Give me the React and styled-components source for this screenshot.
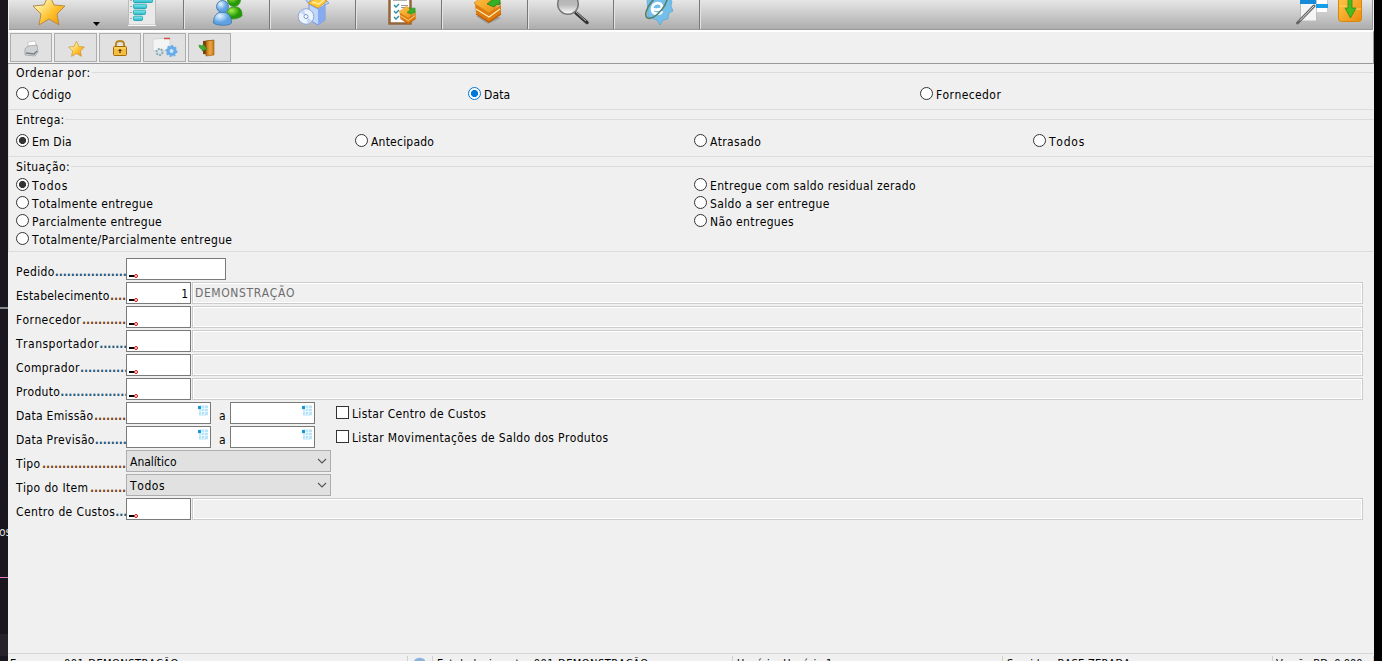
import React from 'react';
import styled, { createGlobalStyle } from 'styled-components';

const Global = createGlobalStyle`
  * { box-sizing: border-box; }
  body { margin: 0; overflow: hidden; background: #000; }
`;

const Desktop = styled.div`
  display: flex;
  width: 1382px;
  height: 661px;
  overflow: hidden;
  background: #000;
  font: 12px/18px 'DejaVu Sans Condensed', 'DejaVu Sans', sans-serif;
  font-stretch: condensed;
  font-kerning: none;
  color: #000;
`;
const Edge = styled.div`
  width: 8px;
  height: 661px;
  flex: none;
  background: #1a1620;
  overflow: hidden;
  display: flex;
  flex-direction: column;
  color: #ddd;
`;
const EdgeGap = styled.div`
  height: ${p => p.$h}px;
  flex: none;
  background: ${p => p.$c || 'transparent'};
`;
const EdgeText = styled.div`
  height: 18px;
  flex: none;
  margin-left: -1px;
`;
const Window = styled.div`
  width: 1366px;
  height: 661px;
  display: flex;
  flex-direction: column;
  background: #f0f0f0;
  white-space: nowrap;
  overflow: hidden;
`;
const MainBar = styled.div`
  height: 30px;
  flex: none;
  display: flex;
  margin: 0 1px;
  border-bottom: 1px solid #999;
  border-right: 1px solid #999;
  background: linear-gradient(#e6e6e6, #adadad);
`;
const MainButton = styled.div`
  width: ${p => p.$w}px;
  height: 29px;
  flex: none;
  border-right: ${p => (p.$sep ? '1px solid #777' : '0')};
  box-shadow: ${p => (p.$sep ? '1px 0 #e4e4e4' : 'none')};
  svg { display: block; }
`;
const Spacer = styled.div`flex: 1;`;
const SubBar = styled.div`
  height: 34px;
  flex: none;
  display: flex;
  gap: 2px;
  padding: 1px 0 0 2px;
  border-top: 2px solid #fff;
  border-bottom: 1px solid #999;
  border-right: 1px solid #999;
`;
const SubButton = styled.div`
  width: ${p => p.$w}px;
  height: 29px;
  background: #e1e1e1;
  border: 1px solid #adadad;
  svg { display: block; }
`;
const Group = styled.div`
  height: ${p => p.$h}px;
  flex: none;
  display: flex;
  flex-direction: column;
  border-bottom: 1px solid #dcdcdc;
  border-left: 1px solid #dcdcdc;
`;
const Legend = styled.div`
  height: 18px;
  flex: none;
  display: flex;
  align-items: center;
  margin-top: ${p => p.$top || 0}px;
  padding-left: 7px;
  letter-spacing: ${p => p.$ls || 0}px;
  &::after {
    content: '';
    flex: 1;
    height: 1px;
    margin: -1px 0 0 1px;
    background: #dcdcdc;
  }
`;
const Options = styled.div`
  display: grid;
  grid-template-columns: ${p => p.$cols};
  grid-auto-rows: 18px;
  grid-auto-flow: ${p => (p.$rows ? 'column' : 'row')};
  grid-template-rows: ${p => (p.$rows ? `repeat(${p.$rows}, 18px)` : 'none')};
  padding: ${p => p.$top}px 0 0 7px;
`;
const Option = styled.div`
  display: flex;
  align-items: center;
  height: 18px;
  gap: 3px;
  letter-spacing: ${p => p.$ls || 0}px;
`;
const Dot = styled.span`
  width: 13px;
  height: 13px;
  flex: none;
  margin-top: -4px;
  border-radius: 50%;
  border: 1px solid ${p => (p.$c === 'blue' ? '#0078d7' : '#333')};
  background: ${p => (p.$c ? `radial-gradient(circle, ${p.$c === 'blue' ? '#0078d7' : '#333'} 3.2px, #fff 3.9px)` : '#fff')};
`;
const Form = styled.div`
  flex: 1;
  display: flex;
  flex-direction: column;
  gap: 2px;
  padding: 6px 11px 0 8px;
`;
const Row = styled.div`
  height: 22px;
  flex: none;
  display: flex;
`;
const Label = styled.div`
  width: 110px;
  height: 23px;
  flex: none;
  display: flex;
  justify-content: space-between;
  padding-top: 5px;
  letter-spacing: ${p => p.$ls || 0}px;
`;
const Leader = styled.span`
  color: ${p => (p.$brown ? '#7c4416' : '#235a7c')};
  font-weight: bold;
  letter-spacing: -0.1px;
`;
const Field = styled.div`
  width: ${p => p.$w}px;
  height: 22px;
  flex: none;
  display: flex;
  justify-content: space-between;
  border: 1px solid #7a7a7a;
  background: #fff;
  padding: 0 2px;
  line-height: 22px;
  svg { display: block; }
`;
const Description = styled.div`
  flex: 1;
  margin-left: 1px;
  height: 22px;
  padding: 0 2px;
  border: 1px solid #ccc;
  box-shadow: inset 0 0 0 1px #fff;
  color: #6d6d6d;
  line-height: 21px;
  letter-spacing: 0.6px;
`;
const Between = styled.div`
  width: 19px;
  padding: 5px 0 0 8px;
`;
const Check = styled.div`
  display: flex;
  align-items: center;
  gap: 3px;
  height: 24px;
  margin-left: 21px;
  letter-spacing: 0.34px;
`;
const Box = styled.span`
  width: 13px;
  height: 13px;
  margin-top: -4px;
  border: 1px solid #333;
  background: #fff;
`;
const Select = styled.div`
  width: 205px;
  height: 22px;
  display: flex;
  justify-content: space-between;
  padding: 0 3px;
  border: 1px solid #adadad;
  background: #e1e1e1;
  line-height: 22px;
  letter-spacing: ${p => p.$ls || 0}px;
  svg { display: block; margin-top: 7px; }
`;
const Status = styled.div`
  height: 8px;
  flex: none;
  display: flex;
  border-top: 1px solid #d7d7d7;
  padding-top: 2px;
  overflow: hidden;
`;
const StatusCell = styled.div`
  width: ${p => p.$w}px;
  flex: none;
  height: 18px;
  padding-left: ${p => p.$pl ?? 3}px;
  border-right: 1px solid #d0d0d0;
  font-size: 11px;
  line-height: 16px;
  letter-spacing: ${p => p.$ls || 0}px;
  white-space: pre;
`;
const Defs = styled.svg`position: absolute;`;

const STAR = 'M0 -17 L5 -6 L16 -5 L8 3 L10 14 L0 8 L-10 14 L-8 3 L-16 -5 L-5 -6Z';

const Gradients = () => (
  <Defs width="0" height="0">
    <defs>
      <linearGradient id="gold" x1="0" y1="0" x2="1" y2="1"><stop offset="0.25" stopColor="#fff3a6" /><stop offset="0.6" stopColor="#ffc02c" /><stop offset="1" stopColor="#e89000" /></linearGradient>
      <linearGradient id="orange" x1="0" y1="0" x2="1" y2="1"><stop offset="0" stopColor="#ffc94a" /><stop offset="1" stopColor="#ec8a0c" /></linearGradient>
      <radialGradient id="azure" cx="0.35" cy="0.3"><stop offset="0" stopColor="#e6f5ff" /><stop offset="1" stopColor="#5fa2e2" /></radialGradient>
      <radialGradient id="green" cx="0.35" cy="0.3"><stop offset="0" stopColor="#a4f04c" /><stop offset="1" stopColor="#259a06" /></radialGradient>
      <linearGradient id="glass" x1="0" y1="0" x2="0" y2="1"><stop offset="0" stopColor="#aeaeae" /><stop offset="0.55" stopColor="#bbb" /><stop offset="1" stopColor="#fff" /></linearGradient>
      <linearGradient id="teal" x1="0" y1="0" x2="0" y2="1"><stop offset="0" stopColor="#8cecf2" /><stop offset="1" stopColor="#25b8c8" /></linearGradient>
      <linearGradient id="wood" x1="0" y1="0" x2="1" y2="0"><stop offset="0" stopColor="#b66a16" /><stop offset="0.5" stopColor="#efa83c" /><stop offset="1" stopColor="#c47a1c" /></linearGradient>
    </defs>
  </Defs>
);

const FavoriteMenu = () => (
  <svg width="95" height="29"><path d={STAR} transform="translate(40 11)" fill="url(#gold)" stroke="#b48a4c" strokeLinejoin="round" /><path d="M84 22h7l-3.500 4z" fill="#000" /></svg>
);
const ReportIcon = () => (
  <svg width="78" height="29">
    <path d="M23.500 -2h27v27h-27z" fill="#e9e9e9" stroke="#bbb" /><path d="M23 25.500h28" stroke="#f8f8f8" />
    <g fill="url(#teal)" stroke="#159dae" strokeWidth=".8"><rect x="28.500" y="-2" width="19" height="4.500" rx="1" /><rect x="28.500" y="4.200" width="13" height="4.300" rx="1" /><rect x="28.500" y="10.200" width="12" height="4.300" rx="1" /><rect x="28.500" y="16.200" width="9" height="4.300" rx="1" /></g>
    <path d="M25 0.500h2M25 6.500h2M25 12.500h2M25 18.500h2" stroke="#aaa" />
  </svg>
);
const UsersIcon = () => (
  <svg width="85" height="29">
    <g fill="url(#green)" stroke="#278b10" strokeWidth=".7"><path d="M42 18c0-8 3-11 9-11s7 4 7 9c-4 3-12 4-16 2z" /><circle cx="50" cy="0" r="6.500" /></g>
    <g fill="url(#azure)" stroke="#3a72ab" strokeWidth=".8"><path d="M29.500 23c0-7 3-11 9-11s9 4 9 11c-2 3-15 3-18 0z" /><circle cx="38.500" cy="6.500" r="6" /></g>
  </svg>
);
const PackageIcon = () => (
  <svg width="85" height="29">
    <path d="M39 4l9 5 7-4v15l-7 5-9-5z" fill="#c0d7fc" stroke="#6687d6" strokeWidth=".8" /><path d="M48 9v16l7-5V5z" fill="#86aaf0" />
    <path d="M38 3l-3-4h7zM55 5l4-2-2-2-4 1z" fill="#b9d2fa" stroke="#6c8ad2" strokeWidth=".7" />
    <path d="M38 3l10-6 9 4-9 7z" fill="#ffca38" stroke="#d49219" strokeWidth=".8" /><path d="M42 2l7 2 6-5" fill="none" stroke="#fff0a4" strokeWidth="1.500" />
    <circle cx="36" cy="16.500" r="7.800" fill="#edf3fc" stroke="#8da6d9" /><path d="M36 16.500l-6-4a7 7 0 0 1 4-3zM36 16.500l6 4a7 7 0 0 1-4 3z" fill="#c5d9f3" /><circle cx="36" cy="16.500" r="2" fill="#fff" stroke="#7896ce" />
  </svg>
);
const BookShape = ({ x, y, s = 1 }) => (
  <g transform={`translate(${x} ${y}) scale(${s})`}>
    <path d="M1 4l14 8 12-7v9L15 23 2 13z" fill="#e07a0a" />
    <path d="M2 9l13 8 11-8" fill="none" stroke="#fff0bd" strokeWidth="1.200" />
    <path d="M2 14l13 8 12-8" fill="none" stroke="#b95d0a" strokeWidth="1.200" />
    <path d="M0 3L12-6l15 9-12 10z" fill="url(#orange)" stroke="#d48a20" strokeWidth=".8" />
    <path d="M13 4l5-4-2-3h10v8l-3-1-3 3z" fill="#35af26" stroke="#187d15" strokeWidth=".7" />
  </g>
);
const ChecklistIcon = () => (
  <svg width="85" height="29">
    <path d="M33.500-3h21v26.500h-21z" fill="#fff" stroke="#94663a" strokeWidth="2.500" /><path d="M37 0h14" stroke="#999" strokeWidth="1.500" />
    <path d="M38 5l2 2 3-3M38 11l2 2 3-3M38 17l2 2 3-3" fill="none" stroke="#258aa6" strokeWidth="1.300" /><path d="M45 5.500h7M45 7.500h7" stroke="#999" />
    <BookShape x={43} y={10} s={0.62} />
  </svg>
);
const BookIcon = () => <svg width="85" height="29"><path d="M34 16l12 8 13-6-7-3z" fill="#777" opacity=".5" /><BookShape x={32} y={0} /></svg>;
const SearchIcon = () => (
  <svg width="85" height="29"><path d="M48 13l11 9.500" stroke="#333" strokeWidth="3.500" strokeLinecap="round" /><path d="M48 12l10 9" stroke="#bbb" strokeWidth="1" /><circle cx="40" cy="4" r="10.300" fill="url(#glass)" stroke="#777" strokeWidth="1.500" /></svg>
);
const BrowserIcon = () => (
  <svg width="85" height="29">
    <path d="M33-2l18-4 3 5 4 2-1 5 2 5-4 2-1 6-5 1-3 5-3-5-9-3z" fill="#74bfe9" stroke="#5ba3cc" strokeWidth=".7" />
    <path d="M48 11c-2 4-10 4-10-2 0-7 10-8 10-2 0 3-6 3-9 2" fill="none" stroke="#fff" strokeWidth="2.800" />
    <ellipse cx="42.500" cy="6" rx="6.500" ry="15" transform="rotate(39 42.500 6)" fill="none" stroke="#52806a" strokeWidth="1.600" />
  </svg>
);
const NotesIcon = () => (
  <svg width="43" height="29"><path d="M15.500-2h16v23h-16z" fill="#f5f5f5" stroke="#bbb" /><path d="M15 0h16v4H15z" fill="#168bd8" /><path d="M31.500-2h11v14.500h-11z" fill="#fff" stroke="#ccc" /><path d="M31 4h12v4H31z" fill="#179ee6" /><path d="M12.500 23L29 6" stroke="#666" strokeWidth="3" strokeLinecap="round" /><path d="M15 20.500L29 6" stroke="#ddd" /></svg>
);
const DownloadIcon = () => (
  <svg width="44" height="29"><rect x="10.500" y="-4" width="23" height="25.500" rx="3" fill="url(#orange)" stroke="#d9860e" /><path d="M12 6h6l2 3h13" fill="none" stroke="#ffd76d" /><path d="M20-1h4v9h4l-5.500 10L17 8h3z" fill="#48bb20" stroke="#248b13" strokeWidth=".7" /></svg>
);

const PrinterIcon = () => (
  <svg width="41" height="27"><path d="M17 8l7-1 2 6-9 1z" fill="#fff" stroke="#bbb" strokeWidth=".7" /><path d="M14 15l3-3 9-1 1 7-3 4-10-1z" fill="#cfd2d4" stroke="#9b9b9b" strokeWidth=".7" /><path d="M15 19l8 1 3-3" fill="none" stroke="#7d8082" strokeWidth="1.500" /></svg>
);
const SmallStar = () => <svg width="41" height="27"><path d={STAR} transform="translate(21.500 15.500) scale(.49)" fill="url(#gold)" stroke="#d09337" strokeWidth="1.500" /></svg>;
const LockIcon = () => (
  <svg width="41" height="27"><path d="M16 13v-3c0-4 8-4 8 0v3" fill="none" stroke="#b98a24" strokeWidth="2" /><rect x="13.500" y="12.500" width="13" height="9" rx="1" fill="#f5bd40" stroke="#a36b08" /><path d="M14 14h12" stroke="#ffe189" /><path d="M20 15v4M18.500 16.500h3" stroke="#513300" strokeWidth="1.200" /></svg>
);
const ServiceIcon = () => (
  <svg width="41" height="27"><path d="M9 5l17-1v12l-17 1z" fill="#f4f4f4" stroke="#d5d5d5" /><path d="M20 4.500h6" stroke="#d34c47" strokeWidth="1.500" /><circle cx="15.500" cy="18" r="3" fill="#d7e4e7" stroke="#8eaab3" strokeWidth="2" strokeDasharray="2 1" /><circle cx="27.500" cy="17" r="3.500" fill="#c9e7ff" stroke="#6aabea" strokeWidth="3" /><circle cx="27.500" cy="17" r="5.300" fill="none" stroke="#6aabea" strokeWidth="1.500" strokeDasharray="2 2" /></svg>
);
const DoorIcon = () => (
  <svg width="41" height="27"><path d="M14 7l10-1v15l-10-1z" fill="#76420d" /><path d="M17 7l8-1v15l-8 1z" fill="url(#wood)" stroke="#99570c" strokeWidth=".6" /><path d="M10 11l4 1v-2l4 5-5 2v-2c-2 0-3-2-3-4z" fill="#43ad2e" stroke="#217d1a" strokeWidth=".5" /></svg>
);
const SearchMark = () => <svg width="10" height="20"><path d="M0 16h5v2H0z" fill="#000" /><circle cx="7" cy="17" r="1.500" fill="#fff" stroke="#e20000" /></svg>;
const Calendar = () => <svg width="11" height="20"><path d="M2 2.500h9v9l-1 1H2z" fill="#b7e4f8" /><path d="M2 5.500h9M2 8.500h9M4.500 3v9M7.500 3v9" stroke="#e6f7ff" /><path d="M1 3h3v3H1z" fill="#1596d8" /></svg>;
const Chevron = () => <svg width="10" height="7"><path d="M1 1l4 4 4-4" fill="none" stroke="#555" strokeWidth="1.100" /></svg>;

const mainTools = [[UsersIcon, 86], [PackageIcon, 86], [ChecklistIcon, 86], [BookIcon, 86], [SearchIcon, 86], [BrowserIcon, 86]];
const subTools = [[PrinterIcon, 42], [SmallStar, 43], [LockIcon, 42], [ServiceIcon, 43], [DoorIcon, 43]];

const Radio = ({ text, on, ls = 0.35 }) => <Option $ls={ls}><Dot $c={on} />{text}</Option>;
const FormLabel = ({ text, dots, brown, ls = 0.38 }) => (
  <Label $ls={ls}><span>{text}</span><Leader $brown={brown}>{'.'.repeat(dots)}</Leader></Label>
);
const LookupRow = ({ label, dots, brown, ls, value, description, wide }) => (
  <Row>
    <FormLabel text={label} dots={dots} brown={brown} ls={ls} />
    <Field $w={wide ? 100 : 65}><SearchMark />{value}</Field>
    {!wide && <Description>{description}</Description>}
  </Row>
);
const DateRow = ({ label, brown, option }) => (
  <Row>
    <FormLabel text={label} dots={8} brown={brown} ls={0.28} />
    <Field $w={85}><span /><Calendar /></Field>
    <Between>a</Between>
    <Field $w={85}><span /><Calendar /></Field>
    <Check><Box />{option}</Check>
  </Row>
);
const SelectRow = ({ label, dots, value, ls }) => (
  <Row><FormLabel text={label} dots={dots} brown /><Select $ls={ls}>{value}<Chevron /></Select></Row>
);

export default function App() {
  return (
    <Desktop>
      <Global />
      <Gradients />
      <Edge>
        <EdgeGap $h={307} /><EdgeGap $h={2} $c="#888" /><EdgeGap $h={214} /><EdgeText>os</EdgeText>
        <EdgeGap $h={36} /><EdgeGap $h={1} $c="#e77ab8" /><EdgeGap $h={56} /><EdgeGap $h={22} $c="#25222c" />
      </Edge>
      <Window>
        <MainBar>
          <MainButton $w={96}><FavoriteMenu /></MainButton>
          <MainButton $w={79} $sep><ReportIcon /></MainButton>
          {mainTools.map(([Icon, w], i) => <MainButton key={i} $w={w} $sep><Icon /></MainButton>)}
          <Spacer />
          <MainButton $w={43}><NotesIcon /></MainButton>
          <MainButton $w={44}><DownloadIcon /></MainButton>
        </MainBar>
        <SubBar>{subTools.map(([Icon, w], i) => <SubButton key={i} $w={w}><Icon /></SubButton>)}</SubBar>
        <Group $h={46}>
          <Legend $ls={0.45}>Ordenar por:</Legend>
          <Options $cols="452px 452px auto" $top={4}>
            <Radio text="Código" /><Radio text="Data" on="blue" ls={0.1} /><Radio text="Fornecedor" ls={0.4} />
          </Options>
        </Group>
        <Group $h={47}>
          <Legend $ls={0.3} $top={1}>Entrega:</Legend>
          <Options $cols="339px 339px 339px auto" $top={4}>
            <Radio text="Em Dia" on="dark" ls={0.2} /><Radio text="Antecipado" ls={0.22} /><Radio text="Atrasado" /><Radio text="Todos" ls={0.75} />
          </Options>
        </Group>
        <Group $h={95}>
          <Legend $ls={0.4} $top={1}>Situação:</Legend>
          <Options $cols="678px auto" $rows={4} $top={1}>
            <Radio text="Todos" on="dark" ls={0.75} /><Radio text="Totalmente entregue" /><Radio text="Parcialmente entregue" ls={0.31} /><Radio text="Totalmente/Parcialmente entregue" />
            <Radio text="Entregue com saldo residual zerado" ls={0.33} /><Radio text="Saldo a ser entregue" /><Radio text="Não entregues" />
          </Options>
        </Group>
        <Form>
          <LookupRow label="Pedido" dots={18} wide />
          <LookupRow label="Estabelecimento" dots={4} brown ls={0.22} value="1" description="DEMONSTRAÇÃO" />
          <LookupRow label="Fornecedor" dots={11} brown />
          <LookupRow label="Transportador" dots={7} ls={0.5} />
          <LookupRow label="Comprador" dots={12} />
          <LookupRow label="Produto" dots={17} ls={0.3} />
          <DateRow label="Data Emissão" brown option="Listar Centro de Custos" />
          <DateRow label="Data Previsão" option="Listar Movimentações de Saldo dos Produtos" />
          <SelectRow label="Tipo" dots={21} value="Analítico" />
          <SelectRow label="Tipo do Item" dots={9} value="Todos" ls={0.6} />
          <LookupRow label="Centro de Custos" dots={3} />
        </Form>
        <Status>
          <StatusCell $w={400} $pl={2} $ls={0.45}>Empresa: 001-DEMONSTRAÇÃO</StatusCell>
          <StatusCell $w={25} $pl={5}><svg width="14" height="16"><path d="M1 8V5c2-4 8-4 11-1V2v7H7l2-2c-2-2-5-1-6 2z" fill="#8db3db" /></svg></StatusCell>
          <StatusCell $w={300} $pl={4} $ls={0.45}>Estabelecimento: 001-DEMONSTRAÇÃO</StatusCell>
          <StatusCell $w={270} $pl={4} $ls={0.25}>Usuário: Usuário 1</StatusCell>
          <StatusCell $w={270} $pl={4} $ls={0.25}>Servidor: BASE ZERADA</StatusCell>
          <StatusCell $w={101}>Versão BD: 0.000</StatusCell>
        </Status>
      </Window>
    </Desktop>
  );
}
